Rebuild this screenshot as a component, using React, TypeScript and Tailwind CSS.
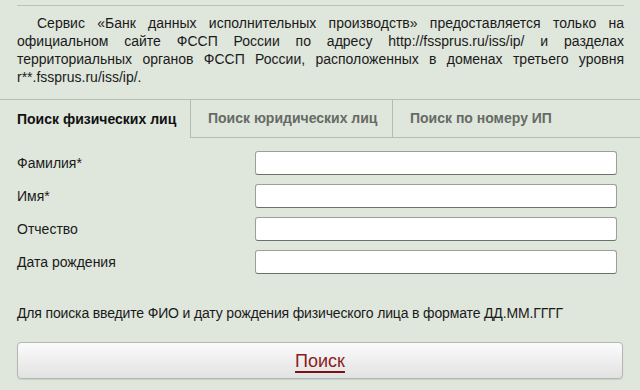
import React from "react";

export default function App() {
  const labels = ["Фамилия*", "Имя*", "Отчество", "Дата рождения"];
  return (
    <div className="w-[640px] h-[390px] overflow-hidden bg-[#dfe6dc] text-[#1a1a1a]" style={{ fontFamily: '"Liberation Sans", Arial, sans-serif' }}>
      <div className="pt-[5px] px-[17px] pr-[16px]">
        <div className="border-t border-[#b9c2b6] pt-[8px]">
          <p className="text-[14px] leading-[18px] text-justify indent-[20px] text-[#1a1a1a]">
            Сервис «Банк данных исполнительных производств» предоставляется только на официальном сайте ФССП России по адресу http://fssprus.ru/iss/ip/ и разделах территориальных органов ФССП России, расположенных в доменах третьего уровня r**.fssprus.ru/iss/ip/.
          </p>
        </div>
      </div>
      <div className="mt-[13px] flex border-t border-[#b4bdb1] h-[39px]">
        <div className="w-[190px] shrink-0 pl-[17px] flex items-center text-[14px] font-bold text-[#111]">
          Поиск физических лиц
        </div>
        <div className="w-[202px] shrink-0 border-l border-b border-[#b4bdb1] pl-[17px] flex items-center text-[14px] font-bold text-[#666a64]">
          Поиск юридических лиц
        </div>
        <div className="flex-1 border-l border-b border-[#b4bdb1] pl-[17px] flex items-center text-[14px] font-bold text-[#666a64]">
          Поиск по номеру ИП
        </div>
      </div>
      <div className="pl-[17px] pr-[23px] pt-[13px] flex flex-col gap-[9px]">
        {labels.map((l) => (
          <div key={l} className="flex items-center h-[24px]">
            <div className="w-[238px] shrink-0 text-[14px] text-[#1a1a1a]">{l}</div>
            <div className="flex-1 h-[24px] bg-white rounded-[3px] border border-[#9aa298] border-b-[#6b7268]" />
          </div>
        ))}
      </div>
      <div className="pl-[17px] mt-[31px] text-[14px] tracking-[-0.15px] text-[#1a1a1a] leading-[16px]">
        Для поиска введите ФИО и дату рождения физического лица в формате ДД.ММ.ГГГГ
      </div>
      <div className="mx-[17px] mt-[21px] h-[37px] rounded-[4px] border border-[#b3b8b1] bg-gradient-to-b from-[#fbfbfb] to-[#e2e2e2] flex items-center justify-center shadow-[0_1px_1px_rgba(0,0,0,0.1)]">
        <span className="text-[18px] leading-[20px] text-[#8d1c1c] underline decoration-2 underline-offset-[4px] decoration-[#7a1010]">Поиск</span>
      </div>
    </div>
  );
}
